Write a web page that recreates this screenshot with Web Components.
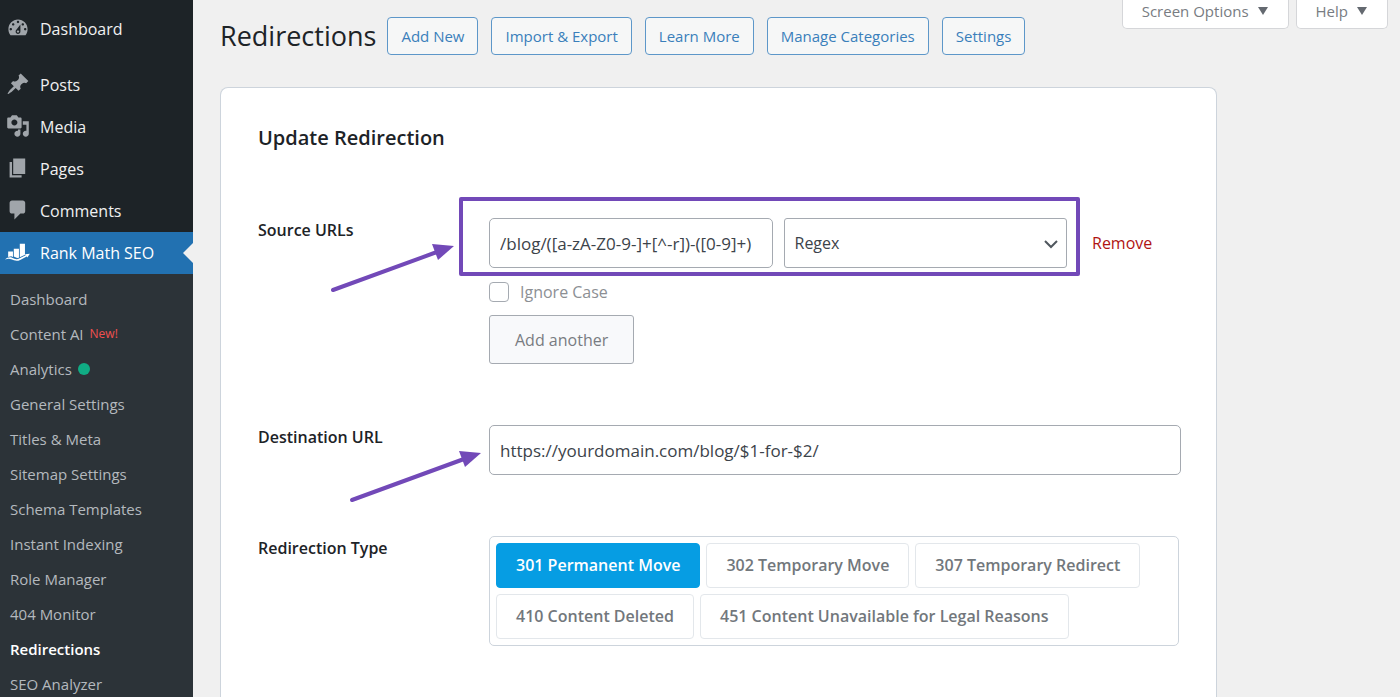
<!DOCTYPE html>
<html lang="en">
<head>
<meta charset="utf-8">
<meta name="viewport" content="width=device-width, initial-scale=1">
<title>Redirections</title>
<style>
  body {
    margin: 0;
    background: #f0f0f0;
    color: #1d2327;
    font: 16px/24px "Open Sans", "Noto Sans", sans-serif;
  }
</style>
</head>
<body>
<admin-shell>
  <admin-menu slot="menu">
    <menu-item icon="dashboard" spaced>Dashboard</menu-item>
    <menu-item icon="posts">Posts</menu-item>
    <menu-item icon="media">Media</menu-item>
    <menu-item icon="pages">Pages</menu-item>
    <menu-item icon="comments">Comments</menu-item>
    <menu-item icon="rankmath" current>Rank Math SEO</menu-item>
    <sub-menu>
      <sub-item>Dashboard</sub-item>
      <sub-item badge="New!">Content AI</sub-item>
      <sub-item dot>Analytics</sub-item>
      <sub-item>General Settings</sub-item>
      <sub-item>Titles &amp; Meta</sub-item>
      <sub-item>Sitemap Settings</sub-item>
      <sub-item>Schema Templates</sub-item>
      <sub-item>Instant Indexing</sub-item>
      <sub-item>Role Manager</sub-item>
      <sub-item>404 Monitor</sub-item>
      <sub-item current>Redirections</sub-item>
      <sub-item>SEO Analyzer</sub-item>
    </sub-menu>
  </admin-menu>

  <page-header heading="Redirections">
    <title-action>Add New</title-action>
    <title-action>Import &amp; Export</title-action>
    <title-action>Learn More</title-action>
    <title-action>Manage Categories</title-action>
    <title-action>Settings</title-action>
    <screen-tab slot="tabs">Screen Options</screen-tab>
    <screen-tab slot="tabs">Help</screen-tab>
  </page-header>

  <redirection-form></redirection-form>
</admin-shell>

<script>
const ICONS = {
  dashboard: '<path fill-rule="evenodd" d="M3.76 16h12.48c1.1-1.37 1.76-3.11 1.76-5 0-4.42-3.58-8-8-8s-8 3.58-8 8c0 1.89.66 3.63 1.76 5zM10 4c.55 0 1 .45 1 1s-.45 1-1 1-1-.45-1-1 .45-1 1-1zM6 6c.55 0 1 .45 1 1s-.45 1-1 1-1-.45-1-1 .45-1 1-1zm8 0c.55 0 1 .45 1 1s-.45 1-1 1-1-.45-1-1 .45-1 1-1zm-5.37 5.55L12 7v6c0 1.1-.9 2-2 2s-2-.9-2-2c0-.57.24-1.08.63-1.45zM4 10c.55 0 1 .45 1 1s-.45 1-1 1-1-.45-1-1 .45-1 1-1zm12 0c.55 0 1 .45 1 1s-.45 1-1 1-1-.45-1-1 .45-1 1-1zm-5 3c0-.55-.45-1-1-1s-1 .45-1 1 .45 1 1 1 1-.45 1-1z"/>',
  posts: '<path d="M10.44 3.02l1.82-1.82 6.36 6.35-1.83 1.82c-1.05-.68-2.48-.57-3.41.36l-.75.75c-.92.93-1.04 2.35-.35 3.41l-1.83 1.82-2.41-2.41-2.8 2.79c-.42.42-3.38 2.71-3.8 2.29s1.86-3.39 2.28-3.81l2.79-2.79L4.1 9.36l1.83-1.82c1.05.69 2.48.57 3.4-.36l.75-.75c.93-.92 1.05-2.35.36-3.41z"/>',
  media: '<path fill-rule="evenodd" d="M13 11V4c0-.55-.45-1-1-1h-1.67L9 1H5L3.67 3H2c-.55 0-1 .45-1 1v7c0 .55.45 1 1 1h10c.55 0 1-.45 1-1zM7 4.5c1.38 0 2.5 1.12 2.5 2.5S8.38 9.5 7 9.5 4.5 8.38 4.5 7 5.62 4.5 7 4.5zM14 6h5v10.5c0 1.38-1.12 2.5-2.5 2.5S14 17.88 14 16.5s1.12-2.5 2.5-2.5c.17 0 .34.02.5.05V9h-3V6zm-4 8.05V13h2v3.5c0 1.38-1.12 2.5-2.5 2.5S7 17.88 7 16.5 8.12 14 9.5 14c.17 0 .34.02.5.05z"/>',
  pages: '<path d="M6 15V2h10v13H6zm-1 1h8v2H3V5h2v11z"/>',
  comments: '<path d="M5 2h9c1.1 0 2 .9 2 2v7c0 1.1-.9 2-2 2h-2l-5 5v-5H5c-1.1 0-2-.9-2-2V4c0-1.1.9-2 2-2z"/>',
  rankmath: '<path d="M1.800 9.500h4v4.700l-1.500-.7-2.500.6zM6.500 7.300h4.300v7.500l-1.500.3-2.800-1.300zM11.500 3.200h4.300v9l-4.300 2.200z"/><path d="M-.8 16.300C1 14.600 3.200 13.900 5 14.800c2.400 1.200 4 1.700 6.400.5l5-2.500-.5-.9 4-.5-2.100 3.200-.5-.8-5.500 2.800c-2.600 1.300-5 .6-7.400-.5-1.800-.8-3-.6-5.200.2z"/>',
};

const define = (name, html, setup) => {
  const template = document.createElement('template');
  template.innerHTML = html;

  customElements.define(name, class extends HTMLElement {
    constructor() {
      super();
      this.attachShadow({ mode: 'open' }).appendChild(template.content.cloneNode(true));
    }

    connectedCallback() {
      if (setup) setup(this, this.shadowRoot);
    }
  });
};

define('admin-shell', `
  <style>
    :host {
      display: flex;
      height: 100vh;
      overflow: hidden;
    }
    main {
      flex: 1;
      min-width: 0;
      display: flex;
      flex-direction: column;
      padding-left: 27px;
    }
  </style>
  <slot name="menu"></slot>
  <main><slot></slot></main>
`);

define('admin-menu', `
  <style>
    :host {
      flex: 0 0 193px;
      background: #1d2327;
    }
    nav {
      display: flex;
      flex-direction: column;
      padding-top: 8px;
    }
  </style>
  <nav aria-label="Main menu"><slot></slot></nav>
`);

define('menu-item', `
  <style>
    :host { display: block; }
    :host([spaced]) { margin-bottom: 14px; }
    a {
      display: flex;
      align-items: center;
      gap: 10px;
      height: 42px;
      padding-left: 6px;
      position: relative;
      color: #f0f0f1;
      text-decoration: none;
    }
    svg {
      width: 24px;
      height: 24px;
      margin-bottom: 2px;
      overflow: visible;
      fill: #a0a5aa;
    }
    :host([current]) a { background: #2271b1; color: #fff; }
    :host([current]) svg { fill: #fff; }
    :host([current]) a::after {
      content: "";
      position: absolute;
      right: 0;
      top: 11px;
      border: 10px solid transparent;
      border-left: 0;
      border-right-color: #f0f0f0;
    }
  </style>
  <a href="#"><svg viewBox="0 0 20 20" aria-hidden="true"></svg><span><slot></slot></span></a>
`, (host, root) => {
  root.querySelector('svg').innerHTML = ICONS[host.getAttribute('icon')] || '';
});

define('sub-menu', `
  <style>
    :host {
      display: block;
      background: #2c3338;
      padding: 7px 0;
    }
  </style>
  <slot></slot>
`);

define('sub-item', `
  <style>
    :host { display: block; }
    a {
      display: flex;
      align-items: center;
      gap: 6px;
      height: 35px;
      padding-left: 10px;
      color: #b4b9be;
      font-size: 15px;
      text-decoration: none;
    }
    :host([current]) a { color: #fff; font-weight: 600; }
    .badge { font-size: 12px; color: #f0504f; }
    .badge:empty { display: none; }
    .dot {
      display: none;
      width: 12px;
      height: 12px;
      border-radius: 50%;
      background: #10ac84;
    }
    :host([dot]) .dot { display: block; }
  </style>
  <a href="#"><span><slot></slot></span><span class="badge"></span><span class="dot"></span></a>
`, (host, root) => {
  root.querySelector('.badge').textContent = host.getAttribute('badge') || '';
});

define('page-header', `
  <style>
    :host {
      display: flex;
      align-items: flex-start;
      justify-content: space-between;
      padding-right: 12px;
      margin-bottom: 32px;
    }
    .title, .actions, .tabs { display: flex; align-items: center; }
    .title { gap: 11px; padding-top: 17px; }
    .actions { gap: 13px; }
    .tabs { gap: 7px; }
    h1 {
      margin: 0;
      font-size: 27px;
      font-weight: 400;
      line-height: 38px;
    }
  </style>
  <div class="title"><h1></h1><div class="actions"><slot></slot></div></div>
  <div class="tabs"><slot name="tabs"></slot></div>
`, (host, root) => {
  root.querySelector('h1').textContent = host.getAttribute('heading');
});

define('title-action', `
  <style>
    :host { display: block; }
    a {
      display: block;
      padding: 0 13px;
      border: 1px solid #5d97c9;
      border-radius: 4px;
      background: #f6f7f7;
      color: #3a7fbb;
      font-size: 15px;
      line-height: 36px;
      white-space: nowrap;
      text-decoration: none;
    }
  </style>
  <a href="#"><slot></slot></a>
`);

define('screen-tab', `
  <style>
    :host { display: block; }
    button {
      display: flex;
      align-items: center;
      gap: 9px;
      height: 29px;
      padding: 0 20px 6px 19px;
      border: 1px solid #d5d6d9;
      border-top: 0;
      border-radius: 0 0 5px 5px;
      background: #fff;
      color: #787c82;
      font: inherit;
      font-size: 15px;
      white-space: nowrap;
    }
    svg { width: 10px; height: 8px; fill: #646970; }
  </style>
  <button type="button" aria-expanded="false"><slot></slot><svg viewBox="0 0 10 8" aria-hidden="true"><path d="M0 0h10L5 8z"/></svg></button>
`);

define('callout-arrow', `
  <style>
    :host {
      display: block;
      position: absolute;
      pointer-events: none;
    }
    svg { display: block; overflow: visible; }
    line { stroke: #7249b8; stroke-width: 4; stroke-linecap: round; }
    path { fill: #7249b8; }
  </style>
  <svg aria-hidden="true"><line></line><path></path></svg>
`, (host, root) => {
  const w = Number(host.getAttribute('width'));
  const h = Number(host.getAttribute('height'));
  const svg = root.querySelector('svg');
  svg.setAttribute('width', w);
  svg.setAttribute('height', h);

  const line = root.querySelector('line');
  line.setAttribute('x1', 2);
  line.setAttribute('y1', h - 2);
  line.setAttribute('x2', w - 17);
  line.setAttribute('y2', 9);
  root.querySelector('path').setAttribute('d', `M${w} 3L${w - 22} 1L${w - 16} 17z`);
});

define('redirection-form', `
  <style>
    :host {
      flex: 1;
      box-sizing: border-box;
      margin-right: 183px;
      padding: 34px 35px 0 37px;
      border: 1px solid #cdd4dc;
      border-bottom: 0;
      border-radius: 8px 8px 0 0;
      background: #fff;
    }
    h2 {
      margin: 0 0 64px;
      font-size: 20px;
      font-weight: 600;
      line-height: 32px;
    }
    .row {
      display: grid;
      grid-template-columns: 231px minmax(0, 1fr);
      position: relative;
      margin-bottom: 61px;
    }
    .name { font-weight: 600; }
    input[type=text], select {
      box-sizing: border-box;
      width: 100%;
      height: 50px;
      margin: 0;
      padding: 0 10px;
      border: 1px solid #a5aab1;
      border-radius: 5px;
      background: #fff;
      color: #3c434a;
      font: inherit;
    }
    input[type=text] { font-size: 17px; }
    select { appearance: none; border-radius: 3px; }
    .source { display: flex; align-items: center; gap: 25px; }
    .pair {
      flex: 1;
      display: grid;
      grid-template-columns: 1fr 1fr;
      gap: 11px;
      position: relative;
    }
    .pair::after {
      content: "";
      position: absolute;
      inset: -21px -13px -8px -30px;
      border: 4px solid #7249b8;
      border-radius: 2px;
      pointer-events: none;
    }
    .choice { position: relative; }
    .choice svg {
      position: absolute;
      right: 9px;
      top: 21px;
      fill: none;
      stroke: #50575e;
      stroke-width: 2;
      pointer-events: none;
    }
    .source a { flex: 0 0 89px; color: #b01313; text-decoration: none; }
    .check {
      display: flex;
      align-items: center;
      gap: 11px;
      margin: 12px 0 11px;
      color: #8c8f94;
    }
    .check input {
      appearance: none;
      box-sizing: border-box;
      width: 20px;
      height: 20px;
      margin: 0;
      border: 1px solid #a5aab1;
      border-radius: 4px;
      background: #fff;
    }
    .another {
      height: 49px;
      padding: 0 25px;
      border: 1px solid #a5aab1;
      border-radius: 3px;
      background: #f8f9fb;
      color: #787c82;
      font: inherit;
    }
    fieldset {
      display: flex;
      flex-wrap: wrap;
      gap: 6px;
      min-width: 0;
      margin: 0 2px 0 0;
      padding: 6px;
      border: 1px solid #cdd4dc;
      border-radius: 5px;
    }
    fieldset label {
      padding: 0 19px;
      border: 1px solid #e3e7eb;
      border-radius: 4px;
      color: #72777c;
      font-weight: 600;
      line-height: 43px;
      white-space: nowrap;
    }
    fieldset label:has(:checked) {
      border-color: #069de3;
      background: #069de3;
      color: #fff;
    }
    fieldset input {
      appearance: none;
      position: absolute;
      width: 0;
      height: 0;
      margin: 0;
    }
    .near { left: 73px; top: 25px; }
    .far { left: 92px; top: 25px; }
  </style>

  <h2>Update Redirection</h2>
  <form>
    <div class="row">
      <label class="name" for="source">Source URLs</label>
      <div>
        <div class="source">
          <div class="pair">
            <input type="text" id="source" value="/blog/([a-zA-Z0-9-]+[^-r])-([0-9]+)">
            <div class="choice">
              <select aria-label="Comparison">
                <option>Exact</option>
                <option>Contains</option>
                <option selected>Regex</option>
              </select>
              <svg width="14" height="10" viewBox="0 0 14 10" aria-hidden="true"><path d="M1 2l6 6 6-6"/></svg>
            </div>
          </div>
          <a href="#">Remove</a>
        </div>
        <label class="check"><input type="checkbox">Ignore Case</label>
        <button class="another" type="button">Add another</button>
      </div>
      <callout-arrow class="near" width="123" height="49"></callout-arrow>
    </div>
    <div class="row">
      <label class="name" for="target">Destination URL</label>
      <input type="text" id="target" value="https://yourdomain.com/blog/$1-for-$2/">
      <callout-arrow class="far" width="131" height="52"></callout-arrow>
    </div>
    <div class="row">
      <span class="name" id="type">Redirection Type</span>
      <fieldset aria-labelledby="type">
        <label><input type="radio" name="type" checked>301 Permanent Move</label>
        <label><input type="radio" name="type">302 Temporary Move</label>
        <label><input type="radio" name="type">307 Temporary Redirect</label>
        <label><input type="radio" name="type">410 Content Deleted</label>
        <label><input type="radio" name="type">451 Content Unavailable for Legal Reasons</label>
      </fieldset>
    </div>
  </form>
`);
</script>
</body>
</html>
